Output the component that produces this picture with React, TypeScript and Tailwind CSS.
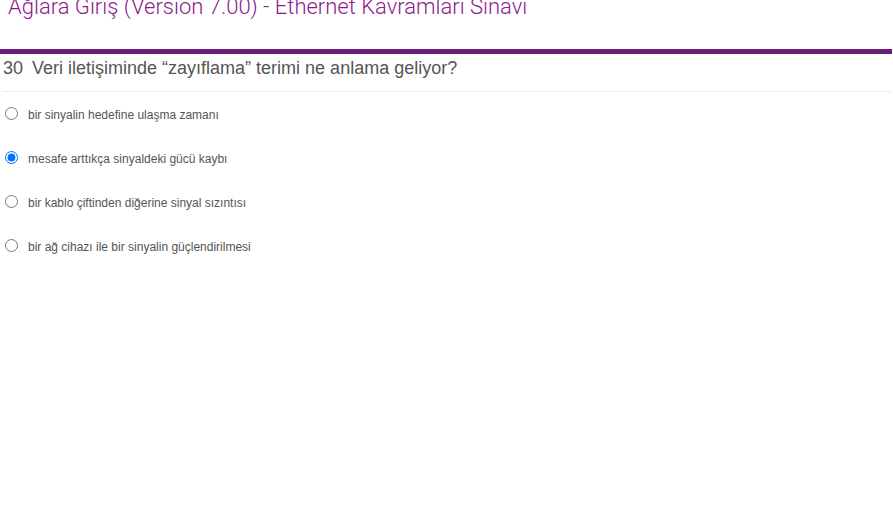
import type { FC } from "react";

const options = [
  "bir sinyalin hedefine ulaşma zamanı",
  "mesafe arttıkça sinyaldeki gücü kaybı",
  "bir kablo çiftinden diğerine sinyal sızıntısı",
  "bir ağ cihazı ile bir sinyalin güçlendirilmesi",
];

const App: FC = () => {
  return (
    <div className="w-[893px] h-[522px] overflow-hidden bg-white font-['Liberation_Sans',Arial,sans-serif]">
      {/* Page title (scrolled partly out of view) */}
      <h1 className="-mt-[4px] pl-2 font-['Roboto',sans-serif] text-[22px] font-light leading-[22px] text-[#8e1a8e]">
        Ağlara Giriş (Version 7.00) - Ethernet Kavramları Sınavı
      </h1>

      <div className="mt-[31px] h-[5px] w-[892px] bg-[#681c7b]" />

      {/* Question */}
      <div className="ml-[2px] w-[890px] border-b border-[#ececec] pb-[11px]">
        <h2 className="pt-[2px] pl-px text-[18px] leading-[24px] text-[#555]">
          <span>30</span>
          <span className="ml-[9px]">Veri iletişiminde “zayıflama” terimi ne anlama geliyor?</span>
        </h2>
      </div>

      {/* Answers */}
      <ul className="mt-[12px] flex flex-col gap-[26px]">
        {options.map((o, i) => (
          <li key={o} className="flex h-[18px] items-center">
            <input
              type="radio"
              name="q30"
              defaultChecked={i === 1}
              className="ml-[5px] mr-0 my-0 h-[13px] w-[13px] accent-[#0075ff]"
            />
            <span className="ml-[10px] pt-[4px] text-[12px] leading-[14px] text-[#555]">{o}</span>
          </li>
        ))}
      </ul>
    </div>
  );
};

export default App;
